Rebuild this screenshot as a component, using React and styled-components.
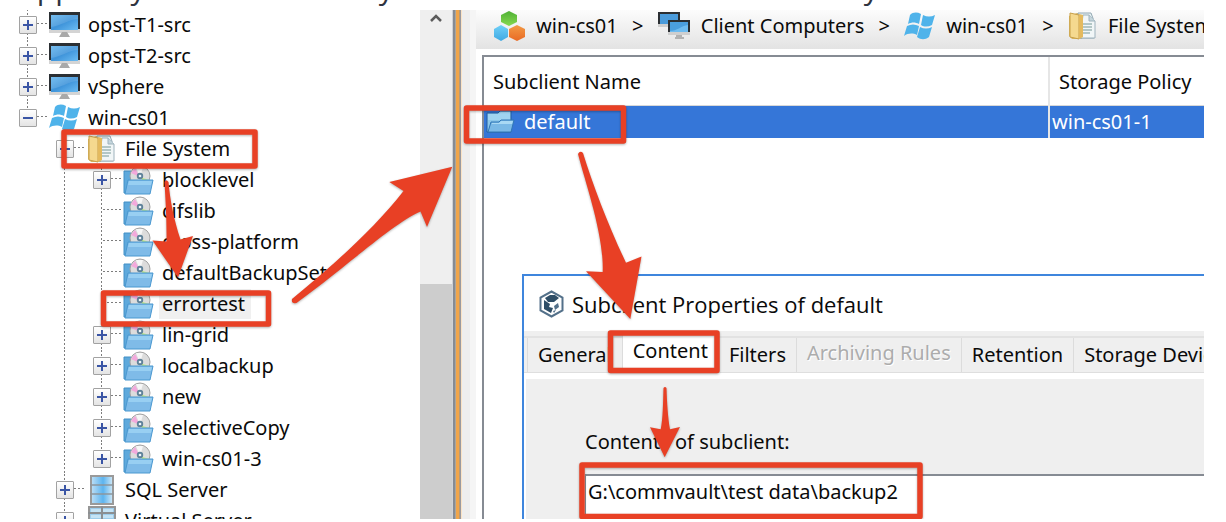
import React from 'react'
import styled, { createGlobalStyle } from 'styled-components'

const colors = {
  ink: '#0a0a0a',
  mark: '#e84025',
  select: '#3576d8',
  chrome: '#efefef',
  edge: '#868b93',
}

const GlobalStyle = createGlobalStyle`
  * {
    box-sizing: border-box;
  }

  body {
    margin: 0;
    background: #fff;
    color: ${colors.ink};
    font-family: 'Noto Sans', 'Open Sans', sans-serif;
    font-size: 20px;
    line-height: 30px;
  }

  button,
  textarea {
    font: inherit;
    color: inherit;
  }
`

const Page = styled.main`
  display: flex;
  flex-direction: column;
  height: 100vh;
  padding: 0 22px 3px 0;
  overflow: hidden;
`

const Intro = styled.div`
  display: flex;
  align-items: flex-end;
  flex: none;
  height: 10px;
  padding-left: 2px;
  overflow: hidden;

  p {
    margin: 0;
    color: #2f3440;
    font-family: 'Open Sans', 'Noto Sans', sans-serif;
    font-size: 30px;
    line-height: 45px;
    white-space: nowrap;
  }
`

const Figure = styled.div`
  position: relative;
  display: flex;
  flex: 1;
  min-height: 0;
  overflow: hidden;
`

/* tree */

const TreePane = styled.aside`
  flex: none;
  width: 420px;
  overflow: hidden;
`

const Tree = styled.ul`
  margin: 0;
  padding: 0 0 0 19px;
  list-style: none;
`

const TreeRow = styled.li`
  display: flex;
  align-items: center;
  height: 31px;
  padding-bottom: 2px;
  white-space: nowrap;
`

const dotsDown = 'repeating-linear-gradient(#7d7d7d 0 2px, transparent 2px 4px)'
const dotsAcross = 'repeating-linear-gradient(to right, #7d7d7d 0 2px, transparent 2px 4px)'

const Guide = styled.span`
  flex: none;
  width: 37px;
  height: 31px;
  background: ${p => (p.$on ? dotsDown : 'none')} 8px 0 / 1px 100% no-repeat;
`

const Branch = styled.span`
  display: flex;
  align-items: center;
  flex: none;
  width: 30px;
  height: 31px;
  background:
    ${dotsDown} 8px 0 / 1px ${p => (p.$last ? '50%' : '100%')} no-repeat,
    ${dotsAcross} 10px 14px / 19px 1px no-repeat;
`

const Expander = styled.button`
  display: flex;
  align-items: center;
  justify-content: center;
  width: 18px;
  height: 18px;
  padding: 0;
  border: 1px solid #a2a2a2;
  border-radius: 1px;
  background: linear-gradient(#fff, #e4e4e4);
`

const IconSlot = styled.span`
  display: flex;
  justify-content: center;
  flex: none;
  width: 31px;
`

const Label = styled.span`
  margin-left: 5px;
  padding: 0 6px 0 3px;
  background: ${p => (p.$selected ? '#f0f0f0' : 'transparent')};
`

const Scrollbar = styled.div`
  display: flex;
  flex-direction: column;
  align-items: center;
  flex: none;
  width: 32px;
  padding-top: 4px;
  background: ${colors.chrome};
`

const Thumb = styled.div`
  flex: 1;
  width: 100%;
  margin-top: 262px;
  background: #cdcdcd;
`

const Splitter = styled.div`
  flex: none;
  width: 24px;
  background: linear-gradient(
    to right,
    #cfd2d6 0 1px,
    #868b93 1px 3px,
    #aaa69e 3px 4px,
    #f0a54a 4px 7px,
    #b89b78 7px 8px,
    #9a9aa0 8px 9px,
    #fbe3c4 9px 10px,
    #eee 10px 18px,
    #f5f5f5 18px
  );
`

/* right side */

const Main = styled.section`
  position: relative;
  display: flex;
  flex-direction: column;
  flex: 1;
  min-width: 0;
`

const Crumbs = styled.nav`
  display: flex;
  align-items: center;
  flex: none;
  height: 39px;
  padding: 0 0 8px 17px;
  overflow: hidden;
  background: linear-gradient(#fcfcfc, #e3e3e3);
  white-space: nowrap;

  a {
    display: flex;
    align-items: center;
    flex: none;
    gap: 11px;
    color: inherit;
    text-decoration: none;
  }

  i {
    flex: none;
    width: 40px;
    font-style: normal;
    text-align: center;
  }
`

const Grid = styled.div`
  flex: 1;
  margin: 6px 0 0 6px;
  border: solid ${colors.edge};
  border-width: 2px 0 0 2px;
`

const Table = styled.table`
  width: 100%;
  border-collapse: collapse;
  table-layout: fixed;

  th {
    height: 48px;
    padding: 2px 0 0 9px;
    border-bottom: 1px solid #d8d8d8;
    font-weight: 400;
    text-align: left;
  }

  th + th,
  td + td {
    width: 155px;
    border-left: 2px solid #e6e6e6;
  }

  td {
    height: 33px;
    padding: 0 0 0 2px;
    background: ${colors.select};
    color: #fff;
  }
`

const Name = styled.div`
  display: flex;
  align-items: center;
  gap: 9px;
`

const Dialog = styled.section`
  position: absolute;
  top: 264px;
  right: 0;
  bottom: 0;
  left: 46px;
  display: flex;
  flex-direction: column;
  border: solid #3f86dd;
  border-width: 2px 0 0 2px;
  background: #fff;
`

const TitleBar = styled.header`
  display: flex;
  align-items: center;
  flex: none;
  gap: 8px;
  height: 55px;
  padding-left: 15px;

  h1 {
    margin: 0;
    font-family: 'Open Sans', 'Noto Sans', sans-serif;
    font-size: 22px;
    font-weight: 400;
  }
`

const Tabs = styled.div`
  display: flex;
  align-items: flex-end;
  flex: none;
  height: 42px;
  padding-left: 3px;
  overflow: hidden;
  border-bottom: 1px solid #dedede;
  background: linear-gradient(${colors.chrome} 0 5px, #e2e2e2 5px 7px, ${colors.chrome} 7px);
`

const Tab = styled.button`
  flex: none;
  height: ${p => (p.$active ? '39px' : '34px')};
  padding: 0 10px ${p => (p.$active ? '3px' : '0')};
  border: 0;
  border-left: 1px solid #dcdcdc;
  background: ${p => (p.$active ? '#fff' : 'transparent')};
  white-space: nowrap;

  &:disabled {
    padding-bottom: 4px;
    color: #acacac;
    text-shadow: 1px 1px #fff;
  }
`

const TabPanel = styled.div`
  display: flex;
  flex-direction: column;
  flex: 1;
  min-height: 0;
  margin: 6px 0 0 2px;
  padding: 48px 0 0 59px;
  background: ${colors.chrome};

  textarea {
    flex: 1;
    margin-top: 17px;
    padding: 1px 2px;
    border: solid ${colors.edge};
    border-width: 2px 0 0 1px;
    border-radius: 0;
    outline: 0;
    background: #fff;
    resize: none;
    overflow: hidden;
  }
`

const Marks = styled.svg`
  position: absolute;
  top: -10px;
  left: 0;
  width: 1204px;
  height: 522px;
  pointer-events: none;
  filter: drop-shadow(0 1px 1px rgba(0, 0, 0, .3));
`

/* icons */

const Monitor = () => (
  <svg width="31" height="26" viewBox="0 0 31 26">
    <defs>
      <linearGradient id="screen" x1="0" y1="0" x2="1" y2="1">
        <stop offset="0" stopColor="#63b5ee" />
        <stop offset=".5" stopColor="#3f94da" />
        <stop offset="1" stopColor="#6cbcf2" />
      </linearGradient>
    </defs>
    <path d="M0 1h31v20H0z" fill="#d4d4d4" />
    <path d="M0 0h31v17H0z" fill="#2b2f33" />
    <path d="M2 3h27v15H2z" fill="url(#screen)" />
    <path d="M2 15C12 14 20 7 29 7V3H2z" fill="#fff" opacity=".12" />
    <path d="M13 20h5l3 5H10z" fill="#a9a9a9" />
  </svg>
)

const Windows = () => (
  <svg width="31" height="28" viewBox="0 0 31 28">
    <g fill="#4fb3ea">
      <path d="M6 3C9 0 13 0 17 2l-2 10C11 10 8 10 4 12z" />
      <path d="M19 3c4 2 8 2 12 0l-3 10c-4 2-8 2-11 0z" />
      <path d="M3 14c4-2 8-2 12 0l-2 9C9 21 4 21 0 24z" />
      <path d="M16 15c4 2 8 2 12 0l-3 10c-4 3-8 3-12 0z" />
    </g>
  </svg>
)

const FileSystem = () => (
  <svg width="29" height="28" viewBox="0 0 29 28">
    <path d="M1 24l3 3h10V1H9L1 4z" fill="#d8b763" />
    <path d="M10 1h13l3 8v17H12z" fill="#e3edf0" stroke="#93a9b4" />
    <path d="M15 3h6l6 6v17H12z" fill="#f1f6f7" stroke="#9eb2bc" />
    <path d="M21 3v6h6" fill="#c4d5dc" stroke="#9eb2bc" />
    <path d="M15 12h9M15 15h9M15 18h9M15 21h7" stroke="#9fb8b6" strokeWidth="1.4" />
    <path d="M2 1l9 2v24l-9-2z" fill="#f5d98f" stroke="#c89f49" />
    <path d="M11 2l4 1v22l-4 2z" fill="#e4ba5e" />
  </svg>
)

const BackupSet = () => (
  <svg width="31" height="30" viewBox="0 0 31 30">
    <path d="M1 6h7l2 2h15v20H1z" fill="#5ea9dc" stroke="#4290c6" />
    <circle cx="17" cy="11" r="10" fill="#dcdcdc" stroke="#a3a3a3" />
    <path d="M17 12L8 8l4-5z" fill="#f3a9dc" />
    <path d="M17 12l9 3-3 5z" fill="#c4e889" />
    <path d="M17 12l-4-10h7z" fill="#f7f7f7" />
    <circle cx="17" cy="11" r="3.2" fill="#5f8299" />
    <circle cx="17" cy="11" r="1.3" fill="#eef6fb" />
    <path d="M5 15h25l-3 14H2z" fill="#7fbbe8" stroke="#4a98d0" />
    <path d="M6 16h23l-1 4H5z" fill="#98cff2" />
  </svg>
)

const Server = () => (
  <svg width="24" height="30" viewBox="0 0 24 30">
    <defs>
      <linearGradient id="rack">
        <stop offset="0" stopColor="#bfe0f6" />
        <stop offset=".55" stopColor="#5db4ef" />
        <stop offset="1" stopColor="#d3eaf8" />
      </linearGradient>
    </defs>
    <path d="M1 1h22v28H1z" fill="url(#rack)" stroke="#9a9a9a" strokeWidth="2" />
    <path d="M0 10h24M0 19h24" stroke="#8d979d" strokeWidth="1.5" />
  </svg>
)

const VirtualServer = () => (
  <svg width="28" height="30" viewBox="0 0 28 30">
    <path d="M1 1h26v28H1z" fill="#9dcdec" stroke="#969696" strokeWidth="2" />
    <path d="M3 3h22v3H3zM3 9h22v3H3z" fill="#c4e3f5" />
    <path d="M14 0v29M0 7h28M0 14h28M0 21h28" stroke="#8b8f92" strokeWidth="2" />
  </svg>
)

const Hexagons = () => (
  <svg width="32" height="30" viewBox="0 0 32 30">
    <defs>
      <linearGradient id="green" x1="0" y1="0" x2="0" y2="1">
        <stop offset="0" stopColor="#4fb035" />
        <stop offset="1" stopColor="#86d94f" />
      </linearGradient>
      <linearGradient id="blue" x1="0" y1="0" x2="0" y2="1">
        <stop offset="0" stopColor="#6fd0f8" />
        <stop offset="1" stopColor="#3fa9e2" />
      </linearGradient>
      <linearGradient id="orange" x1="0" y1="0" x2="0" y2="1">
        <stop offset="0" stopColor="#f39a44" />
        <stop offset="1" stopColor="#e96a25" />
      </linearGradient>
    </defs>
    <path d="M16 0l8 4v7l-8 4-8-4V4z" fill="url(#green)" />
    <path d="M8 14l7 4v8l-7 4-7-4v-8z" fill="url(#blue)" />
    <path d="M24 14l8 4v8l-8 4-8-4v-8z" fill="url(#orange)" />
  </svg>
)

const Computers = () => (
  <svg width="32" height="27" viewBox="0 0 32 27">
    <path d="M0 0h22v15H0z" fill="#cfcfcf" />
    <path d="M0 0h22v12H0z" fill="#2b2f33" />
    <path d="M2 2h18v10H2z" fill="#4a9bdb" />
    <path d="M10 8h22v15H10z" fill="#cfcfcf" />
    <path d="M10 8h22v12H10z" fill="#2b2f33" />
    <path d="M12 10h18v10H12z" fill="#4a9fdf" />
    <path d="M12 19c7 0 11-5 18-6v7H12z" fill="#6ebcf1" />
    <path d="M18 23h6v2h2v2h-9v-2h1z" fill="#b2b2b2" />
  </svg>
)

const Folder = () => (
  <svg width="29" height="24" viewBox="0 0 29 24">
    <path d="M1 3h11l2-2h11v21H1z" fill="#8cc7ea" stroke="#245f9f" />
    <path d="M2 4h11l2-2h9v8H2z" fill="#a0d4f1" />
    <path d="M2 22l3-10h8l2-2h13l-3 12z" fill="#7ab9e6" stroke="#2f76b6" />
    <path d="M6 13h7l2-2h12l-1 3H6z" fill="#a9d9f4" />
  </svg>
)

const AppLogo = () => (
  <svg width="25" height="28" viewBox="0 0 25 28">
    <path d="M12.500 1.500L23.500 7.500v13l-11 6-11-6v-13z" fill="#fff" stroke="#54718a" strokeWidth="2" />
    <path d="M6 8l5-3h5l4 3-5 4H9z" fill="#2f4e67" />
    <path d="M5 10l6 4-1 3 4 1-2 5-7-4z" fill="#2f4e67" />
    <path d="M15 16l4-3 1 4-4 3zM14 21l3-1-2 3z" fill="#54718a" />
  </svg>
)

const icons = {
  monitor: Monitor,
  windows: Windows,
  files: FileSystem,
  backup: BackupSet,
  server: Server,
  virtual: VirtualServer,
}

// sign: '+' collapsed, '-' open, nothing for a leaf
const nodes = [
  { text: 'opst-T1-src', icon: 'monitor', level: 0, sign: '+' },
  { text: 'opst-T2-src', icon: 'monitor', level: 0, sign: '+' },
  { text: 'vSphere', icon: 'monitor', level: 0, sign: '+' },
  { text: 'win-cs01', icon: 'windows', level: 0, sign: '-', last: true },
  { text: 'File System', icon: 'files', level: 1, sign: '-' },
  { text: 'blocklevel', icon: 'backup', level: 2, sign: '+' },
  { text: 'cifslib', icon: 'backup', level: 2 },
  { text: 'cross-platform', icon: 'backup', level: 2 },
  { text: 'defaultBackupSet', icon: 'backup', level: 2 },
  { text: 'errortest', icon: 'backup', level: 2, selected: true },
  { text: 'lin-grid', icon: 'backup', level: 2, sign: '+' },
  { text: 'localbackup', icon: 'backup', level: 2, sign: '+' },
  { text: 'new', icon: 'backup', level: 2, sign: '+' },
  { text: 'selectiveCopy', icon: 'backup', level: 2, sign: '+' },
  { text: 'win-cs01-3', icon: 'backup', level: 2, sign: '+', last: true },
  { text: 'SQL Server', icon: 'server', level: 1, sign: '+' },
  { text: 'Virtual Server', icon: 'virtual', level: 1, sign: '+' },
]

const tabs = ['General', 'Content', 'Filters', 'Archiving Rules', 'Retention', 'Storage Device']

const Node = ({ text, icon, level, sign, last, selected }) => {
  const Icon = icons[icon]
  return (
    <TreeRow role="treeitem" aria-level={level + 1} aria-selected={!!selected}>
      {level > 0 && <Guide />}
      {level > 1 && <Guide $on />}
      <Branch $last={last}>
        { sign &&
          <Expander aria-label={`Toggle ${text}`}>
            <svg width="12" height="12" viewBox="0 0 12 12" stroke="#3a55a5" strokeWidth="2">
              <path d={sign === '+' ? 'M1 6h10M6 1v10' : 'M1 6h10'} />
            </svg>
          </Expander>
        }
      </Branch>
      <IconSlot><Icon /></IconSlot>
      <Label $selected={selected}>{text}</Label>
    </TreeRow>
  )
}

const Annotations = () => (
  <Marks viewBox="0 0 1204 522" aria-hidden="true">
    <g fill="none" stroke={colors.mark} strokeWidth="5.500" strokeLinejoin="round">
      <rect x="64" y="132" width="191" height="34" />
      <rect x="103.500" y="293" width="165" height="31" />
      <rect x="466.500" y="108" width="157" height="33" />
      <rect x="610.500" y="333" width="106.500" height="37.500" />
      <rect x="582" y="465" width="338" height="51.500" />
    </g>
    <g fill={colors.mark}>
      <path d="M164.500 182Q166 178.500 168.500 182C170 200 174 220 180.500 239.500L193 236 178 277.500 152.500 240.500 166.500 241.500C166.800 220 165.500 200 164.500 182z" />
      <path d="M292 299C330 268 375 228 403.500 191L389.300 182 452.300 166.700 427 227 420.500 211.500C392 224 345 268 296.500 303Q291 304 292 299z" />
      <path d="M578 154Q580 150 583 153C593 185 608 225 626 262.700L641.500 256.500 630.300 319 586 271.300 602.700 272C604 235 586 185 578 154z" />
      <path d="M663.500 388Q665 386 666.500 388C667 403 668 418 670 429.300L680 427 664.700 457.300 650 427.300 660.700 429.300C663 418 663 403 663.500 388z" />
    </g>
  </Marks>
)

export default () => (
  <Page>
    <GlobalStyle />
    <Intro>
      <p>Suppose your new directory and its contents are restored daily in</p>
    </Intro>
    <Figure>
      <TreePane>
        <Tree role="tree">
          {nodes.map(node => <Node key={node.text} {...node} />)}
        </Tree>
      </TreePane>
      <Scrollbar>
        <svg width="12" height="8" viewBox="0 0 12 8" fill="none" stroke="#5c5c5c" strokeWidth="2.500">
          <path d="M1 7l5-5 5 5" />
        </svg>
        <Thumb />
      </Scrollbar>
      <Splitter />
      <Main>
        <Crumbs>
          <a href="#root"><Hexagons />win-cs01</a>
          <i>&gt;</i>
          <a href="#clients"><Computers />Client Computers</a>
          <i>&gt;</i>
          <a href="#client"><Windows />win-cs01</a>
          <i>&gt;</i>
          <a href="#files"><FileSystem />File System</a>
        </Crumbs>
        <Grid>
          <Table>
            <thead>
              <tr>
                <th>Subclient Name</th>
                <th>Storage Policy</th>
              </tr>
            </thead>
            <tbody>
              <tr>
                <td><Name><Folder />default</Name></td>
                <td>win-cs01-1</td>
              </tr>
            </tbody>
          </Table>
        </Grid>
        <Dialog>
          <TitleBar>
            <AppLogo />
            <h1>Subclient Properties of default</h1>
          </TitleBar>
          <Tabs role="tablist">
            {tabs.map(tab => (
              <Tab
                key={tab}
                role="tab"
                $active={tab === 'Content'}
                aria-selected={tab === 'Content'}
                disabled={tab === 'Archiving Rules'}
              >
                {tab}
              </Tab>
            ))}
          </Tabs>
          <TabPanel>
            <label htmlFor="contents">Contents of subclient:</label>
            <textarea id="contents" spellCheck="false" defaultValue={'G:\\commvault\\test data\\backup2'} />
          </TabPanel>
        </Dialog>
      </Main>
      <Annotations />
    </Figure>
  </Page>
)
